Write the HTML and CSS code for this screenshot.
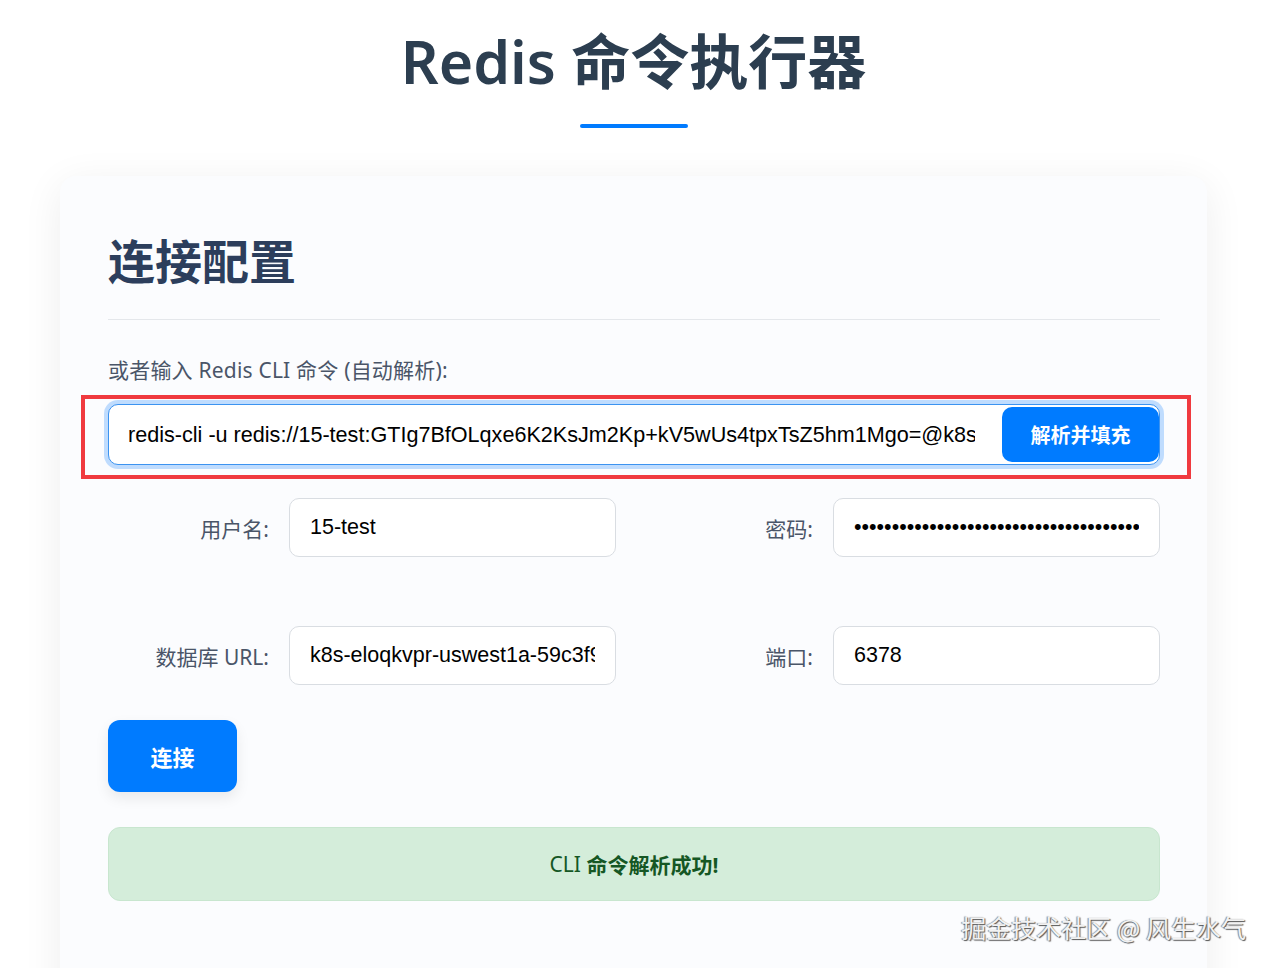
FILE: index.html
```html
<!DOCTYPE html>
<html lang="zh-CN">
<head>
    <meta charset="UTF-8">
    <meta name="viewport" content="width=device-width, initial-scale=1.0">
    <title>Redis 命令执行器</title>
    <link rel="stylesheet" href="styles.css">
</head>
<body>
    <div class="page">
        <h1 class="title">Redis 命令执行器</h1>

        <div class="card">
            <h2 class="card-title">连接配置</h2>

            <label class="cli-label" for="cliInput">或者输入 Redis CLI 命令 (自动解析):</label>
            <div class="cli-group">
                <input type="text" id="cliInput" class="cli-input" value="redis-cli -u redis://15-test:GTIg7BfOLqxe6K2KsJm2Kp+kV5wUs4tpxTsZ5hm1Mgo=@k8s-eloqkvpr-uswest1a-59c3f9e2b1.elb.us-west-1.amazonaws.com:6378">
                <button class="parse-btn">解析并填充</button>
            </div>

            <div class="fields">
                <div class="field">
                    <label for="username">用户名:</label>
                    <input type="text" id="username" value="15-test">
                </div>
                <div class="field">
                    <label for="password">密码:</label>
                    <input type="password" id="password" value="GTIg7BfOLqxe6K2KsJm2Kp+kV5wUs4tpxTsZ5hm1Mgo=">
                </div>
                <div class="field">
                    <label for="host">数据库 URL:</label>
                    <input type="text" id="host" value="k8s-eloqkvpr-uswest1a-59c3f9e2b1.elb.us-west-1.amazonaws.com">
                </div>
                <div class="field">
                    <label for="port">端口:</label>
                    <input type="text" id="port" value="6378">
                </div>
            </div>

            <button class="connect-btn">连接</button>

            <div class="message success"><span class="latin">CLI</span>&nbsp;命令解析成功!</div>
        </div>
    </div>

    <div class="watermark">掘金技术社区 @ 风生水气</div>
</body>
</html>
```

FILE: styles.css
```css
html, body {
    margin: 0;
    padding: 0;
}
body {
    font-family: "Noto Sans", "Noto Sans CJK SC", sans-serif;
    background-color: #ffffff;
    color: #2c3e50;
    overflow: hidden;
    height: 968px;
}
.page {
    width: 1147px;
    margin-left: 60px;
    padding-top: 24px;
}
.title {
    margin: 0;
    text-align: center;
    font-size: 59px;
    line-height: 74px;
    font-weight: 600;
    color: #2c3e50;
}
.title::after {
    content: "";
    display: block;
    width: 108px;
    height: 4px;
    margin: 26px auto 0;
    border-radius: 2px;
    background-color: #007bff;
}
.card {
    margin-top: 48px;
    background-color: #fbfcfe;
    border-radius: 16px;
    padding: 48px 47px 60px 48px;
    box-shadow: 0 8px 40px rgba(0, 0, 0, 0.07);
    min-height: 800px;
}
.card-title {
    margin: 6px 0 0;
    padding-bottom: 27px;
    border-bottom: 1px solid #e4e7eb;
    font-size: 47px;
    line-height: 62px;
    font-weight: 700;
    color: #2c3e5c;
}
.cli-label {
    display: block;
    margin-top: 34px;
    font-size: 21px;
    line-height: 32px;
    letter-spacing: 0.2px;
    color: #4a5568;
}
.cli-group {
    position: relative;
    margin-top: 18px;
}
/* красная рамка-выделение вокруг строки CLI */
.cli-group::before {
    content: "";
    position: absolute;
    top: -9px;
    left: -27px;
    right: -31px;
    bottom: -14px;
    border: 4px solid #f03a3f;
    pointer-events: none;
}
.cli-input {
    display: block;
    width: 100%;
    box-sizing: border-box;
    height: 61px;
    padding: 0 184px 0 19px;
    border: 1px solid #3c93f0;
    border-radius: 10px;
    background-color: #ffffff;
    box-shadow: 0 0 0 4px rgba(0, 123, 255, 0.24);
    font-family: "Liberation Sans", Arial, sans-serif;
    font-size: 21.6px;
    color: #000000;
    outline: none;
}
.parse-btn {
    position: absolute;
    top: 3px;
    right: 1px;
    bottom: 3px;
    width: 157px;
    border: none;
    border-radius: 10px;
    background-color: #007bff;
    color: #ffffff;
    font-family: "Noto Sans CJK SC", sans-serif;
    font-size: 20px;
    font-weight: 700;
    cursor: pointer;
}
.fields {
    display: grid;
    grid-template-columns: 1fr 1fr;
    column-gap: 36px;
    row-gap: 69px;
    margin-top: 33px;
}
.field {
    display: flex;
    align-items: center;
}
.field label {
    width: 161px;
    flex-shrink: 0;
    margin-right: 20px;
    text-align: right;
    font-size: 21px;
    color: #4a5568;
}
.field input {
    flex: 1;
    min-width: 0;
    height: 59px;
    box-sizing: border-box;
    padding: 0 20px;
    border: 1px solid #d9dde2;
    border-radius: 10px;
    background-color: #ffffff;
    font-family: "Liberation Sans", Arial, sans-serif;
    font-size: 21.5px;
    color: #000000;
    outline: none;
}
.connect-btn {
    display: block;
    margin-top: 35px;
    width: 129px;
    height: 72px;
    border: none;
    border-radius: 12px;
    background-color: #007bff;
    color: #ffffff;
    font-family: "Noto Sans CJK SC", sans-serif;
    font-size: 22px;
    font-weight: 700;
    box-shadow: 0 6px 14px rgba(0, 0, 0, 0.08);
    cursor: pointer;
}
.message {
    margin-top: 35px;
    height: 74px;
    box-sizing: border-box;
    display: flex;
    align-items: center;
    justify-content: center;
    border-radius: 12px;
    font-size: 21px;
    font-weight: 700;
}
.message .latin {
    font-weight: 400;
}
.success {
    background-color: #d4edda;
    border: 1px solid #c8e6cf;
    color: #155724;
}
.watermark {
    position: absolute;
    right: 26px;
    top: 909px;
    font-family: "Noto Sans CJK SC", sans-serif;
    font-size: 25px;
    color: #f2f2f2;
    text-shadow: 1px 1px 1px #555555, -1px 0 1px #888888;
}
```
